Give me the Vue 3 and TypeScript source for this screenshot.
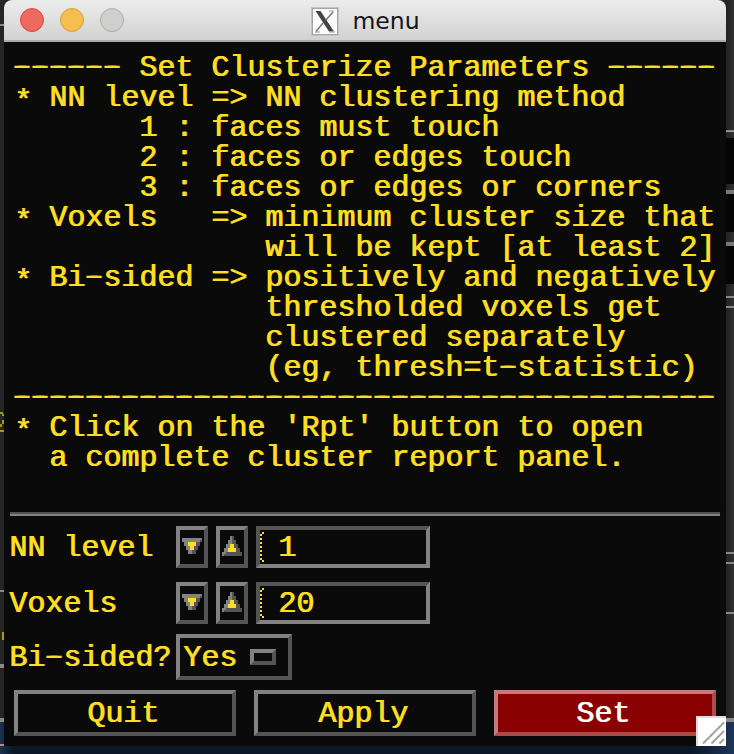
<script setup lang="ts">
import { ref } from 'vue'

const help: string[] = [
  '------ Set Clusterize Parameters ------',
  '* NN level => NN clustering method',
  '       1 : faces must touch',
  '       2 : faces or edges touch',
  '       3 : faces or edges or corners',
  '* Voxels   => minimum cluster size that',
  '              will be kept [at least 2]',
  '* Bi-sided => positively and negatively',
  '              thresholded voxels get',
  '              clustered separately',
  '              (eg, thresh=t-statistic)',
  '---------------------------------------',
  "* Click on the 'Rpt' button to open",
  '  a complete cluster report panel.',
]

// Runs of hyphens and asterisks get their own span so they can be shaped separately.
const split = (line: string): string[] => line.split(/(-+|\*)/).filter((s) => s !== '')
const kind = (s: string): string => (s[0] === '-' ? 'dash' : s === '*' ? 'star' : '')

const fields = ref([
  { label: 'NN level', value: 1 },
  { label: 'Voxels', value: 20 },
])
const bisided = ref('Yes')
const actions = [
  { label: 'Quit', primary: false },
  { label: 'Apply', primary: false },
  { label: 'Set', primary: true },
]
</script>

<template>
  <div class="desktop">
    <section class="window">
      <header class="titlebar">
        <div class="lights"><i class="red"></i><i class="amber"></i><i class="off"></i></div>
        <div class="title">
          <svg width="30" height="32" viewBox="0 0 30 32">
            <rect x="1" y="1" width="28" height="29" fill="#c4c4c4" />
            <rect x="2.500" y="2.500" width="25" height="26" fill="#fbfbfb" stroke="#a6a6a6" />
            <path d="M5.500 5h5l13.500 20.500h-5z" fill="#444" />
            <path d="M23 6 16 14M13 17 6 25.500" stroke="#777" stroke-width="1.500" />
            <path d="M5 26h5M19 26h6M19 5h5" stroke="#999" />
          </svg>
          <span>menu</span>
        </div>
      </header>
      <div class="help">
        <div v-for="(line, i) in help" :key="i" class="line"><span v-for="(s, j) in split(line)" :key="j" :class="kind(s)">{{ s }}</span></div>
      </div>
      <div class="rule"></div>
      <div class="form">
        <div v-for="f in fields" :key="f.label" class="row">
          <span class="label">{{ f.label }}</span>
          <button class="arrow" @click="f.value--">
            <svg width="24" height="34" viewBox="0 0 24 34" shape-rendering="crispEdges">
              <path d="M2 8h20v4h-2v4h-2v4h-2v4h-8v-4h-2v-4h-2v-4h-2z" fill="#828282" />
              <path d="M20 10h2v2h-2v4h-2v4h-2v4h-4v-4h2v-4h2v-4h4z" fill="#545454" />
              <path d="M8 12h8v4h-2v4h-4v-4h-2z" fill="#ffdd22" />
            </svg>
          </button>
          <button class="arrow" @click="f.value++">
            <svg width="24" height="34" viewBox="0 0 24 34" shape-rendering="crispEdges">
              <path d="M10 6h4v4h2v4h2v4h2v4h2v4h-20v-4h2v-4h2v-4h2v-4h2z" fill="#828282" />
              <path d="M12 6h2v4h2v4h2v4h2v4h2v4h-18v-2h2v-2h10v-4h-2v-4h-2z" fill="#545454" />
              <path d="M10 14h4v4h2v4h-8v-4h2z" fill="#ffdd22" />
            </svg>
          </button>
          <div class="field">
            <svg width="4" height="30" viewBox="0 0 4 30" shape-rendering="crispEdges">
              <path d="M2 0h2v2h-2zM2 28h2v2h-2zM0 2h2v2h-2zM0 6h2v2h-2zM0 10h2v2h-2zM0 14h2v2h-2zM0 18h2v2h-2zM0 22h2v2h-2zM0 26h2v2h-2z" fill="#ffdd22" />
            </svg>
            <span>{{ f.value }}</span>
          </div>
        </div>
        <div class="row option-row">
          <span class="label"><span v-for="(s, j) in split('Bi-sided?')" :key="j" :class="kind(s)">{{ s }}</span></span>
          <button class="option"><span>{{ bisided }}</span><i></i></button>
        </div>
      </div>
      <footer class="actions">
        <button v-for="a in actions" :key="a.label" :class="{ primary: a.primary }">{{ a.label }}</button>
      </footer>
      <svg class="grip" width="30" height="30" viewBox="0 0 30 30">
        <rect width="30" height="30" fill="#fff" />
        <path d="M0 1h30M1 0v30" stroke="#ddd" stroke-width="2" />
        <path d="M7 27.500 28 6.500M15.500 27.500 28 15M23.500 27.500 28 23" stroke="#a2a2a2" stroke-width="2" />
      </svg>
    </section>
  </div>
</template>

<style>
body { margin: 0; background: #222; }
</style>

<style scoped>
.desktop {
  box-sizing: border-box;
  width: 734px;
  height: 754px;
  overflow: hidden;
  padding: 0 8px 8px 4px;
  background:
    linear-gradient(#777, #aaa) 726px 130px / 8px 2px no-repeat,
    linear-gradient(#050505, #050505) 726px 138px / 8px 46px no-repeat,
    linear-gradient(#777, #777) 726px 190px / 8px 4px no-repeat,
    linear-gradient(#050505, #050505) 726px 194px / 8px 38px no-repeat,
    linear-gradient(#777, #777) 726px 242px / 8px 4px no-repeat,
    linear-gradient(#050505, #050505) 726px 246px / 8px 38px no-repeat,
    linear-gradient(#888, #888) 726px 296px / 8px 2px no-repeat,
    linear-gradient(#888, #888) 726px 306px / 8px 2px no-repeat,
    linear-gradient(#888, #888) 726px 552px / 8px 2px no-repeat,
    linear-gradient(#888, #888) 726px 562px / 8px 2px no-repeat,
    linear-gradient(#888, #888) 726px 612px / 8px 2px no-repeat,
    linear-gradient(#888, #888) 726px 718px / 8px 4px no-repeat,
    linear-gradient(90deg, #222, #303030) 726px 0 / 8px 718px no-repeat,
    linear-gradient(#888, #888) 0 24px / 4px 2px no-repeat,
    linear-gradient(#a09c00, #a09c00) 0 412px / 3px 2px no-repeat,
    linear-gradient(#a09c00, #a09c00) 2px 414px / 2px 2px no-repeat,
    linear-gradient(#a09c00, #a09c00) 2px 420px / 2px 4px no-repeat,
    linear-gradient(#a09c00, #a09c00) 0 424px / 2px 3px no-repeat,
    linear-gradient(#a09c00, #a09c00) 0 430px / 4px 2px no-repeat,
    linear-gradient(#888, #888) 0 590px / 4px 2px no-repeat,
    linear-gradient(#aaa100, #aaa100) 2px 632px / 2px 8px no-repeat,
    linear-gradient(#888, #888) 0 664px / 4px 4px no-repeat,
    linear-gradient(#888, #888) 0 718px / 4px 4px no-repeat,
    linear-gradient(#c18b6e, #c18b6e) 0 744px / 4px 2px no-repeat,
    linear-gradient(#252525, #252525) 0 0 / 4px 722px no-repeat,
    linear-gradient(#252525, #252525) 0 0 / 734px 40px no-repeat,
    linear-gradient(90deg, #1b3354, #0b1726 14px, #0b1726 690px, #1c355a);
}
.window {
  position: relative;
  display: flex;
  flex-direction: column;
  width: 722px;
  height: 746px;
  background: #0a0a0a;
  border-radius: 8px 8px 0 0;
  color: #ffdd22;
  font: 30px/30px "Liberation Mono", monospace;
  text-shadow: -1px 0 currentColor;
}
.titlebar {
  box-sizing: border-box;
  position: relative;
  display: flex;
  align-items: center;
  justify-content: center;
  height: 42px;
  border-bottom: 2px solid #aaa;
  border-radius: 8px 8px 0 0;
  background: linear-gradient(#ececec, #d2d2d2);
}
.lights { position: absolute; left: 16px; top: 8px; display: flex; gap: 16px; }
.lights i { box-sizing: border-box; width: 24px; height: 24px; border-radius: 50%; border: 1.5px solid #d9493f; background: #ee6a5f; }
.lights .amber { border-color: #d8a03a; background: #f5be4f; }
.lights .off { border-color: #9db597; background: #cfcfcf; }
.title {
  display: flex;
  align-items: center;
  gap: 12px;
  padding-top: 3px;
  color: #151515;
  font: 23.5px/30px "DejaVu Sans", sans-serif;
  text-shadow: none;
}
.title svg { display: block; }
.title span { position: relative; top: -1px; }
.help { padding: 11px 0 0 10px; }
.line { height: 30px; white-space: pre; }
.dash { position: relative; left: -1px; top: -1px; text-shadow: 3.500px 0 currentColor, -3.500px 0 currentColor; }
.star { display: inline-block; height: 30px; vertical-align: top; line-height: 38px; text-shadow: 1px 0 currentColor; }
.rule { height: 2px; margin: 39px 6px 0; background: #545454; border-bottom: 2px solid #828282; }
.form { display: flex; flex-direction: column; padding: 10px 0 0 6px; }
.row { display: flex; align-items: center; gap: 8px; height: 42px; margin-bottom: 14px; }
.label { width: 158px; padding-top: 2px; white-space: pre; }
button {
  box-sizing: border-box;
  margin: 0;
  padding: 0;
  color: inherit;
  font: inherit;
  text-shadow: inherit;
  background: #0a0a0a;
  border: 4px solid;
  border-color: #828282 #545454 #545454 #828282;
}
.arrow { width: 32px; height: 42px; }
.arrow svg { display: block; }
.field {
  box-sizing: border-box;
  display: flex;
  align-items: center;
  gap: 15px;
  width: 174px;
  height: 42px;
  border: 4px solid;
  border-color: #545454 #828282 #828282 #545454;
}
.field span { padding-top: 2px; }
.option-row { height: 46px; margin: -4px 0 0; }
.option { display: flex; align-items: center; width: 116px; height: 46px; padding-left: 4px; }
.option span { padding-top: 2px; }
.option i { box-sizing: border-box; width: 26px; height: 16px; margin: 0 0 0 12px; border: 4px solid; border-color: #828282 #545454 #545454 #828282; }
.actions { display: flex; gap: 18px; padding: 10px 10px 0; }
.actions button { width: 222px; height: 46px; padding: 1px 2px 0 0; }
.actions .primary { color: #fff; background: #8b0000; border-color: #c67b7b #ad4a4a #ad4a4a #c67b7b; }
.grip { position: absolute; right: 0; bottom: 0; }
</style>
